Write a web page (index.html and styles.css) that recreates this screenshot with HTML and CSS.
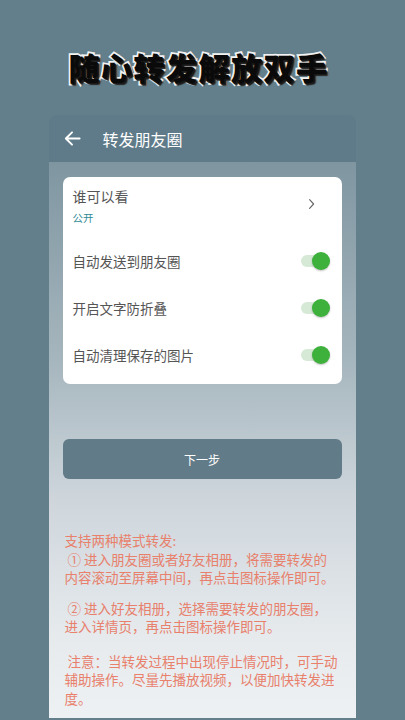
FILE: index.html
```html
<!DOCTYPE html>
<html lang="zh-CN">
<head>
<meta charset="utf-8">
<link rel="stylesheet" href="styles.css">
</head>
<body>
<div class="page">
  <h1 class="headline">随心转发解放双手</h1>
  <div class="phone">
    <div class="topbar">
      <svg class="back" viewBox="0 0 20 20" width="19" height="19"><path d="M17.5 10H3.5M9.5 3.5L3 10l6.5 6.5" fill="none" stroke="#fff" stroke-width="2" stroke-linecap="round" stroke-linejoin="round"/></svg>
      <span class="bar-title">转发朋友圈</span>
    </div>
    <div class="content">
      <div class="card">
        <div class="row row-who">
          <div class="who-text">
            <div class="who-title">谁可以看</div>
            <div class="who-sub">公开</div>
          </div>
          <svg class="chev" viewBox="0 0 10 14" width="8" height="12"><path d="M2 1.5l5 5.5-5 5.5" fill="none" stroke="#666" stroke-width="1.4" stroke-linecap="round" stroke-linejoin="round"/></svg>
        </div>
        <div class="row">
          <span class="label">自动发送到朋友圈</span>
          <span class="toggle"><span class="knob"></span></span>
        </div>
        <div class="row">
          <span class="label">开启文字防折叠</span>
          <span class="toggle"><span class="knob"></span></span>
        </div>
        <div class="row">
          <span class="label">自动清理保存的图片</span>
          <span class="toggle"><span class="knob"></span></span>
        </div>
      </div>
      <div class="btn">下一步</div>
      <div class="notes">
        <p>支持两种模式转发:<br>&nbsp;① 进入朋友圈或者好友相册，将需要转发的<br>内容滚动至屏幕中间，再点击图标操作即可。</p>
        <p class="p2">&nbsp;② 进入好友相册，选择需要转发的朋友圈，<br>进入详情页，再点击图标操作即可。</p>
        <p class="p3">&nbsp;注意：当转发过程中出现停止情况时，可手动<br>辅助操作。尽量先播放视频，以便加快转发进<br>度。</p>
      </div>
    </div>
  </div>
</div>
</body>
</html>
```

FILE: styles.css
```css
html, body {
  margin: 0;
  padding: 0;
}
body {
  background: #627f8b;
  font-family: "Noto Sans CJK SC", "Noto Sans", sans-serif;
  width: 405px;
  height: 720px;
  overflow: hidden;
}
.page {
  display: flex;
  flex-direction: column;
  align-items: center;
  height: 720px;
}
.headline {
  margin: 46px 0 0 -8px;
  height: 42px;
  line-height: 42px;
  font-size: 31px;
  font-weight: 900;
  color: #0a0a0a;
  letter-spacing: 1.5px;
  -webkit-text-stroke: 3.5px #f2f2f2;
  paint-order: stroke fill;
  text-shadow: 2px 2px 1px #1a1a1a, 1px 1px 0 #1a1a1a;
}
.phone {
  margin-top: 27px;
  margin-left: -1px;
  width: 307px;
  flex: 1;
  display: flex;
  flex-direction: column;
  border-radius: 8px 8px 0 0;
  overflow: hidden;
  margin-bottom: 2px;
}
.topbar {
  height: 47px;
  background: #5f7b89;
  display: flex;
  align-items: center;
  padding-left: 14px;
  flex-shrink: 0;
}
.back {
  display: block;
}
.bar-title {
  margin-left: 21px;
  color: #fff;
  font-size: 16px;
}
.content {
  flex: 1;
  background: linear-gradient(180deg, #7f96a1 0%, #a5b5bd 35%, #cdd5db 60%, #e6eaed 85%, #eef1f3 100%);
  padding: 15px 14px 0 14px;
  display: flex;
  flex-direction: column;
}
.card {
  background: #fff;
  border-radius: 7px;
  padding-bottom: 6px;
}
.row {
  height: 47px;
  display: flex;
  align-items: center;
  justify-content: space-between;
  padding: 0 17px 0 10px;
}
.row-who {
  height: 60px;
  align-items: flex-start;
  padding-right: 26px;
}
.who-text {
  padding-top: 9px;
}
.who-title {
  font-size: 14px;
  line-height: 20px;
  color: #555;
}
.who-sub {
  font-size: 10.5px;
  line-height: 16px;
  color: #2f8a96;
  margin-top: 4px;
}
.chev {
  margin-top: 21px;
}
.label {
  font-size: 13.5px;
  color: #555;
}
.toggle {
  position: relative;
  width: 24px;
  height: 12px;
  border-radius: 6px;
  background: #d6e9d6;
}
.knob {
  position: absolute;
  right: -5px;
  top: -3px;
  width: 18px;
  height: 18px;
  border-radius: 50%;
  background: #3db13b;
  box-shadow: 0 1px 2px rgba(0,0,0,0.25);
}
.btn {
  margin-top: 55px;
  height: 40px;
  border-radius: 6px;
  background: #627b88;
  color: #fff;
  font-size: 12px;
  display: flex;
  align-items: center;
  justify-content: center;
}
.notes {
  margin-top: 52px;
  padding-left: 2px;
  color: #e8806c;
  font-size: 13.5px;
  line-height: 18.5px;
}
.notes p {
  margin: 0;
  white-space: nowrap;
}
.notes .p2 {
  margin-top: 12px;
}
.notes .p3 {
  margin-top: 16px;
}
```
